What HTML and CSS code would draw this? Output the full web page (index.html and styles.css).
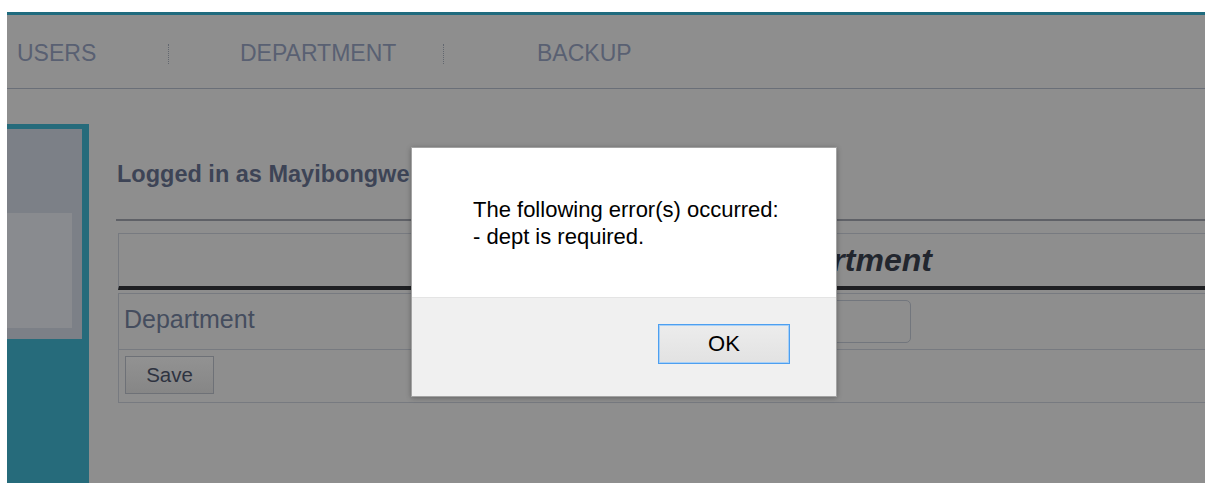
FILE: index.html
```html
<!DOCTYPE html>
<html lang="en">
<head>
<meta charset="utf-8">
<title>Department</title>
<link rel="stylesheet" href="styles.css">
</head>
<body>
<div class="frame">
  <div class="page">
    <nav class="nav">
      <ul class="nav-list">
        <li class="nav-item nav-users">USERS</li>
        <li class="nav-sep"></li>
        <li class="nav-item nav-dept">DEPARTMENT</li>
        <li class="nav-sep"></li>
        <li class="nav-item nav-backup">BACKUP</li>
      </ul>
    </nav>
    <div class="content">
      <aside class="sidebar">
        <div class="side-panel">
          <div class="side-box"></div>
        </div>
      </aside>
      <main class="main">
        <h3 class="who">Logged in as Mayibongwe</h3>
        <div class="rule"></div>
        <div class="form">
          <div class="form-head"><span class="form-title">Add Department</span></div>
          <div class="form-body">
            <div class="form-row">
              <label class="form-label">Department</label>
              <span class="form-input"></span>
            </div>
            <div class="form-row form-actions">
              <button class="btn-save" type="button">Save</button>
            </div>
          </div>
        </div>
      </main>
    </div>
  </div>
</div>

<div class="dialog" role="alertdialog">
  <div class="dialog-msg">
    <p>The following error(s) occurred:</p>
    <p>- dept is required.</p>
  </div>
  <div class="dialog-foot">
    <button class="btn-ok" type="button">OK</button>
  </div>
</div>
</body>
</html>
```

FILE: styles.css
```css
* { box-sizing: border-box; }

html, body {
  margin: 0;
  padding: 0;
  background: #ffffff;
  overflow: hidden;
  font-family: "Liberation Sans", Arial, sans-serif;
}

.frame {
  padding: 12px 0 0 7px;
  height: 483px;
}

.page {
  width: 1198px;
  height: 100%;
  background: #8e8e8e;
  border-top: 3px solid #1f6b7e;
  display: flex;
  flex-direction: column;
  overflow: hidden;
}

/* top navigation */
.nav {
  height: 74px;
  border-bottom: 1px solid #6a6f78;
  display: flex;
  align-items: center;
  padding-top: 4px;
}

.nav-list {
  list-style: none;
  margin: 0;
  padding: 0;
  display: flex;
  align-items: center;
}

.nav-item {
  font-size: 23px;
  color: #596072;
  line-height: 1;
}

.nav-users { width: 161px; padding-left: 10px; }
.nav-dept { width: 274px; padding-left: 71px; }
.nav-backup { padding-left: 93px; }

.nav-sep {
  width: 1px;
  height: 20px;
  border-left: 1px dotted #62676f;
}

/* body area */
.content {
  flex: 1;
  display: flex;
  padding-top: 35px;
}

.sidebar {
  width: 82px;
  flex: none;
  background: #266b7b;
  padding: 5px 7px 0 0;
}

.side-panel {
  background: #7c8087;
  height: 210px;
  padding-top: 84px;
}

.side-box {
  width: 65px;
  height: 115px;
  background: #898b8f;
}

.main {
  flex: 1;
  min-width: 0;
  padding: 37px 0 0 28px;
}

.who {
  margin: 0;
  font-size: 23.5px;
  font-weight: bold;
  color: #3d4456;
  line-height: 27px;
}

.rule {
  margin-top: 31px;
  height: 2px;
  background: #5f6167;
  margin-left: -1px;
}

.form {
  margin-top: 12px;
  margin-left: 1px;
  margin-right: -4px;
}

.form-head {
  height: 57px;
  border: 1px solid #777a80;
  border-bottom: 4px solid #1e1f22;
  display: flex;
  align-items: center;
  padding-left: 564px;
}

.form-title {
  font-size: 32px;
  font-weight: bold;
  font-style: italic;
  color: #22262e;
  white-space: nowrap;
}

.form-body {
  margin-top: 3px;
  border: 1px solid #777a80;
}

.form-row {
  height: 56px;
  border-bottom: 1px solid #777a80;
  display: flex;
  align-items: center;
  padding-left: 5px;
}

.form-row.form-actions {
  height: 52px;
  border-bottom: 0;
  padding-left: 6px;
  align-items: flex-start;
  padding-top: 6px;
}

.form-label {
  width: 306px;
  font-size: 25px;
  color: #454d5e;
  margin-top: -5px;
}

.form-input {
  width: 481px;
  height: 43px;
  border: 1px solid #72767d;
  border-radius: 5px;
}

.btn-save {
  width: 89px;
  height: 38px;
  font-family: inherit;
  font-size: 20.5px;
  color: #2e3340;
  background: linear-gradient(#929292, #868686);
  border: 1px solid #6e7177;
  border-radius: 0;
  padding: 0;
}

/* alert dialog */
.dialog {
  position: absolute;
  left: 411px;
  top: 147px;
  width: 426px;
  height: 250px;
  border: 1px solid #a3a3a3;
  background: #f0f0f0;
  box-shadow: 0 1px 5px rgba(0, 0, 0, 0.3);
  display: flex;
  flex-direction: column;
}

.dialog-msg {
  height: 150px;
  background: #ffffff;
  border-bottom: 1px solid #e4e4e4;
  padding: 48px 0 0 61px;
}

.dialog-msg p {
  margin: 0;
  font-size: 22px;
  line-height: 27px;
  color: #000000;
}

.dialog-foot {
  flex: 1;
  display: flex;
  justify-content: flex-end;
  align-items: flex-start;
  padding: 26px 46px 0 0;
}

.btn-ok {
  width: 132px;
  height: 40px;
  font-family: inherit;
  font-size: 22px;
  color: #000000;
  background: linear-gradient(#ececec, #e2e2e2);
  border: 1px solid #4d9ff0;
  box-shadow: inset 0 0 0 1px #a8d0f6;
  border-radius: 0;
  padding: 0;
}
```
